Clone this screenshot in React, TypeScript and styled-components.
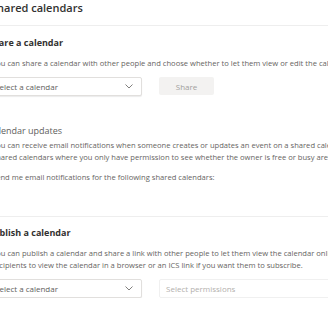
import React from 'react';
import styled, {createGlobalStyle} from "styled-components";

const GlobalStyle = createGlobalStyle`
  body {
    margin: 0;
    background: #ffffff;
    overflow: hidden;
    font-family: "Open Sans", "Noto Sans", sans-serif;
  }
`

const Chevron = () => (
    <svg width="8" height="5" viewBox="0 0 8 5" fill="none">
        <path d="M0.5 0.5 L4 4 L7.5 0.5" stroke="#605e5c" strokeWidth="0.8"/>
    </svg>
)

export default function App() {
    return (
        <>
            <GlobalStyle/>
            <Page>
                <Title>Shared calendars</Title>
                <Divider/>
                <Section>
                    <Heading>Share a calendar</Heading>
                    <Text>You can share a calendar with other people and choose whether to let them view or edit the calendar.</Text>
                    <Row>
                        <Select>
                            <span>Select a calendar</span>
                            <Chevron/>
                        </Select>
                        <Button disabled>Share</Button>
                    </Row>
                </Section>
                <Section $top={28}>
                    <SubTitle>Calendar updates</SubTitle>
                    <Text>
                        You can receive email notifications when someone creates or updates an event on a shared calendar.
                        <br/>
                        Shared calendars where you only have permission to see whether the owner is free or busy aren't listed.
                    </Text>
                    <Text>Send me email notifications for the following shared calendars:</Text>
                </Section>
                <Divider $top={25}/>
                <Section $top={9}>
                    <Heading>Publish a calendar</Heading>
                    <Text>
                        You can publish a calendar and share a link with other people to let them view the calendar online. Use the HTML link for
                        <br/>
                        recipients to view the calendar in a browser or an ICS link if you want them to subscribe.
                    </Text>
                    <Row>
                        <Select>
                            <span>Select a calendar</span>
                            <Chevron/>
                        </Select>
                        <Select $disabled $width={200}>
                            <span>Select permissions</span>
                        </Select>
                    </Row>
                </Section>
            </Page>
        </>
    );
}

const Page = styled.div`
  margin-left: -12px;
  width: 520px;
  color: #323130;
`

const Title = styled.h1`
  margin: 0;
  margin-left: 3px;
  font-size: 11px;
  line-height: 16px;
  font-weight: 600;
  color: #323130;
`

const Divider = styled.hr<{ $top?: number }>`
  margin: ${p => p.$top ?? 9}px 0 0 -20px;
  border: none;
  border-top: 1px solid #eeeeee;
  height: 0;
`

const Section = styled.section<{ $top?: number }>`
  display: flex;
  flex-direction: column;
  padding-top: ${p => p.$top ?? 10}px;
`

const Heading = styled.h2`
  margin: 0 0 7px;
  font-size: 9px;
  line-height: 14px;
  font-weight: 700;
  color: #323130;
`

const SubTitle = styled.h3`
  margin: 0 0 1px;
  font-size: 9px;
  line-height: 14px;
  font-weight: 400;
  color: #605e5c;
`

const Text = styled.p`
  margin: 0 0 8px 4px;
  font-size: 7.6px;
  line-height: 12px;
  color: #666462;
  white-space: nowrap;
`

const Row = styled.div`
  display: flex;
  gap: 17px;
  align-items: flex-start;
`

const Select = styled.div<{ $disabled?: boolean; $width?: number }>`
  box-sizing: border-box;
  width: ${p => p.$width ?? 154}px;
  height: 19px;
  padding: 0 8px 0 6px;
  display: flex;
  align-items: center;
  justify-content: space-between;
  border: 1px solid ${p => p.$disabled ? '#f0f0f0' : '#e1dfdd'};
  border-radius: 2px;
  box-shadow: ${p => p.$disabled ? 'none' : '0 1px 1px rgba(0,0,0,0.08)'};
  background: #ffffff;
  font-size: 8px;
  color: ${p => p.$disabled ? '#b3b0ad' : '#605e5c'};
`

const Button = styled.button`
  box-sizing: border-box;
  width: 55px;
  height: 18px;
  border: none;
  border-radius: 2px;
  background: #f3f2f1;
  color: #a19f9d;
  font-family: inherit;
  font-size: 8px;
  padding: 0;
`
